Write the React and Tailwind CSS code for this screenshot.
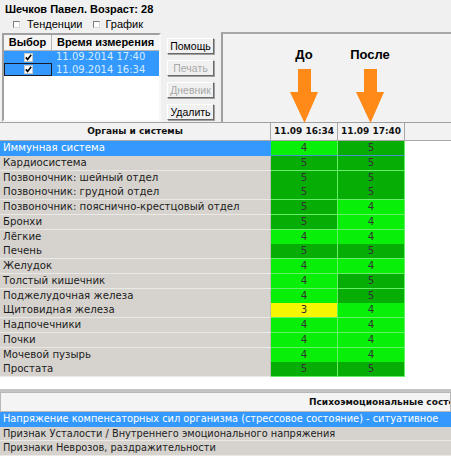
import React from "react";

const rows = [
  ["Иммунная система", 4, 5],
  ["Кардиосистема", 5, 5],
  ["Позвоночник: шейный отдел", 5, 5],
  ["Позвоночник: грудной отдел", 5, 5],
  ["Позвоночник: пояснично-крестцовый отдел", 5, 4],
  ["Бронхи", 5, 4],
  ["Лёгкие", 4, 4],
  ["Печень", 5, 5],
  ["Желудок", 4, 4],
  ["Толстый кишечник", 4, 5],
  ["Поджелудочная железа", 4, 5],
  ["Щитовидная железа", 3, 4],
  ["Надпочечники", 4, 4],
  ["Почки", 4, 4],
  ["Мочевой пузырь", 4, 4],
  ["Простата", 5, 5],
];

const cellBg = {
  3: "bg-[#f6f600]",
  4: "bg-[#08f008]",
  5: "bg-[#05ad05]",
};

function Check() {
  return (
    <span className="flex h-[9px] w-[9px] items-center justify-center border border-[#c8c8c8] bg-white">
      <svg width="7" height="7" viewBox="0 0 7 7">
        <path d="M0.8 3.4 L2.6 5.4 L6.2 0.8" fill="none" stroke="#000" strokeWidth="1.6" />
      </svg>
    </span>
  );
}

function Btn({ children, disabled }) {
  return (
    <div
      className={
        "flex h-[16px] w-[47px] items-center justify-center border border-t-white border-l-white border-r-[#696969] border-b-[#696969] bg-[#f0f0f0] text-[10.5px] leading-none shadow-[1px_1px_0_#a0a0a0] " +
        (disabled ? "text-[#a8a8a8]" : "text-black")
      }
    >
      {children}
    </div>
  );
}

function Arrow() {
  return (
    <svg width="28" height="54" viewBox="0 0 28 54">
      <polygon points="8,0 21,0 21,23 28,23 14.5,54 0,23 8,23" fill="#ff8a18" />
    </svg>
  );
}

export default function App() {
  return (
    <div className="relative h-[456px] w-[451px] overflow-hidden bg-[#f0f0f0] font-['Liberation_Sans',Arial,sans-serif] text-black">
      {/* Title */}
      <div className="h-[32px] pl-[5px] pt-[3px]">
        <div className="text-[11px] font-bold leading-[13px]">Шечков Павел. Возраст: 28</div>
        <div className="mt-[2px] flex items-center pl-[8px] text-[11px] leading-[13px]">
          <span className="h-[7px] w-[7px] border border-[#7a7a7a] border-r-[#d8d8d8] border-b-[#d8d8d8] bg-white" />
          <span className="ml-[7px]">Тенденции</span>
          <span className="ml-[10px] h-[7px] w-[7px] border border-[#7a7a7a] border-r-[#d8d8d8] border-b-[#d8d8d8] bg-white" />
          <span className="ml-[6px]">График</span>
        </div>
      </div>

      {/* Middle */}
      <div className="flex h-[90px]">
        {/* List */}
        <div className="ml-[2px] mt-[1px] h-[89px] w-[159px] border-2 border-t-[#a0a0a0] border-l-[#a0a0a0] border-r-[#f8f8f8] border-b-[#f8f8f8] bg-white">
          <div className="flex h-[16px] border-b border-[#b4b4b4] bg-[#f4f4f4] text-[11px] font-bold leading-[15px]">
            <div className="w-[48px] border-r border-[#b4b4b4] text-center">Выбор</div>
            <div className="flex-1 text-center">Время измерения</div>
          </div>
          <div className="flex h-[12px] bg-[#3399ff] font-['DejaVu_Sans',sans-serif] text-[10px] leading-[12px] text-[#d4ecff]">
            <div className="flex w-[48px] items-center justify-center">
              <Check />
            </div>
            <div className="pl-[4px]">11.09.2014 17:40</div>
          </div>
          <div className="flex h-[13px] bg-[#3399ff] font-['DejaVu_Sans',sans-serif] text-[10px] leading-[11px] text-[#d4ecff]">
            <div className="flex w-[48px] items-center justify-center border border-[#1a1a2a]">
              <Check />
            </div>
            <div className="pl-[4px] pt-[1px]">11.09.2014 16:34</div>
          </div>
        </div>

        {/* Buttons */}
        <div className="ml-[6px] flex flex-col gap-[6px] pt-[6px]">
          <Btn>Помощь</Btn>
          <Btn disabled>Печать</Btn>
          <Btn disabled>Дневник</Btn>
          <Btn>Удалить</Btn>
        </div>

        {/* Panel */}
        <div className="ml-[7px] flex flex-1 border-l-2 border-t-2 border-l-[#a0a0a0] border-t-[#a8a8a8] bg-[#f2f2f2] pl-[61px] pt-[13px]">
          <div className="flex w-[40px] flex-col items-center">
            <div className="text-[13px] font-bold leading-[15px]">До</div>
            <div className="mt-[7px]">
              <Arrow />
            </div>
          </div>
          <div className="ml-[26px] flex w-[40px] flex-col items-center">
            <div className="whitespace-nowrap text-[13px] font-bold leading-[15px]">После</div>
            <div className="mt-[7px]">
              <Arrow />
            </div>
          </div>
        </div>
      </div>

      {/* Organs table */}
      <div className="h-[267px] border-t border-[#a0a0a0] bg-white font-['DejaVu_Sans',sans-serif]">
        <div className="grid h-[18px] grid-cols-[271px_67px_67px] border-b border-[#a8a8a8] bg-[#f2f2f2] text-[9px] font-bold leading-[17px] text-[#111]">
          <div className="border-r border-[#a8a8a8] text-center">Органы и системы</div>
          <div className="border-r border-[#a8a8a8] text-center">11.09 16:34</div>
          <div className="border-r border-[#a8a8a8] text-center">11.09 17:40</div>
        </div>
        {rows.map(([name, a, b], i) => (
          <div key={name} className="grid h-[14.75px] grid-cols-[271px_67px_67px] text-[10.2px] leading-[14px]">
            <div
              className={
                "truncate border-b border-r pl-[3px] " +
                (i === 0
                  ? "border-b-[#3399ff] border-r-[#3399ff] bg-[#3399ff] text-white"
                  : "border-b-[#ebe9e6] border-r-[#bdbab5] bg-[#d6d3ce] text-[#1c1c1c]")
              }
            >
              {name}
            </div>
            <div
              className={
                "border-b border-r border-r-[#66ee66] text-center text-[#333] " +
                cellBg[a] +
                (i === 0 ? " border-b-[#4a8fd0]" : " border-b-[#66ee66]")
              }
            >
              {a}
            </div>
            <div
              className={
                "border-b border-r border-r-[#66ee66] text-center text-[#333] " +
                cellBg[b] +
                (i === 0 ? " border-b-[#4a8fd0]" : " border-b-[#66ee66]")
              }
            >
              {b}
            </div>
          </div>
        ))}
      </div>

      {/* Psycho table */}
      <div className="border-t-[3px] border-[#c4c4c4] font-['DejaVu_Sans',sans-serif]">
        <div className="h-[20px] overflow-hidden whitespace-nowrap border border-[#b8b8b8] bg-[#f4f4f4] pl-[308px] text-[9px] font-bold leading-[19px] text-[#111]">
          Психоэмоциональные состояния
        </div>
        <div className="h-[14.5px] overflow-hidden whitespace-nowrap bg-[#3399ff] pl-[3px] text-[9.8px] leading-[14px] text-white">
          Напряжение компенсаторных сил организма (стрессовое состояние) - ситуативное
        </div>
        <div className="h-[14.5px] overflow-hidden whitespace-nowrap border-b border-[#ebe9e6] bg-[#d6d3ce] pl-[3px] text-[9.8px] leading-[14px] text-[#1c1c1c]">
          Признак Усталости / Внутреннего эмоционального напряжения
        </div>
        <div className="h-[14.5px] overflow-hidden whitespace-nowrap border-b border-[#ebe9e6] bg-[#d6d3ce] pl-[3px] text-[9.8px] leading-[14px] text-[#1c1c1c]">
          Признаки Неврозов, раздражительности
        </div>
      </div>
    </div>
  );
}
